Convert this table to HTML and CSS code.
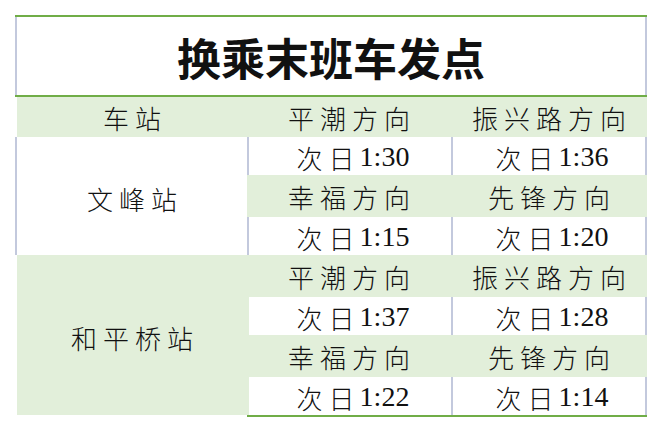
FILE: index.html
```html
<!DOCTYPE html>
<html lang="zh-CN">
<head>
<meta charset="utf-8">
<title>换乘末班车发点</title>
<link rel="stylesheet" href="styles.css">
</head>
<body>
<div class="sheet">
  <div class="title"><div class="title-box">换乘末班车发点</div></div>
  <div class="grid">
    <div class="c hd first">车站</div>
    <div class="c hd">平潮方向</div>
    <div class="c hd">振兴路方向</div>

    <div class="c station s1">文峰站</div>
    <div class="c t c2">次日<span class="n">1:30</span></div>
    <div class="c t c3">次日<span class="n">1:36</span></div>
    <div class="c g">幸福方向</div>
    <div class="c g">先锋方向</div>
    <div class="c t c2">次日<span class="n">1:15</span></div>
    <div class="c t c3">次日<span class="n">1:20</span></div>

    <div class="c station s2">和平桥站</div>
    <div class="c g">平潮方向</div>
    <div class="c g">振兴路方向</div>
    <div class="c t c2 lo">次日<span class="n">1:37</span></div>
    <div class="c t c3">次日<span class="n">1:28</span></div>
    <div class="c g">幸福方向</div>
    <div class="c g">先锋方向</div>
    <div class="c t c2 lo">次日<span class="n">1:22</span></div>
    <div class="c t c3">次日<span class="n">1:14</span></div>
    <div class="rule"></div>
  </div>
</div>
</body>
</html>
```

FILE: styles.css
```css
html, body {
  margin: 0;
  padding: 0;
  background: #ffffff;
}

body {
  font-family: "Liberation Serif", "Noto Sans CJK SC", serif;
  color: #111111;
}

.sheet {
  margin: 15px 0 0 15px;
  width: 632px;
}

.title {
  border-top: 2px solid #70ad47;
  border-bottom: 2px solid #70ad47;
}

.title-box {
  height: 78px;
  border-left: 2px solid #c3c9dd;
  border-right: 2px solid #c3c9dd;
  display: flex;
  align-items: center;
  justify-content: center;
  font-family: "Noto Sans CJK SC", sans-serif;
  font-weight: 700;
  font-size: 44px;
  color: #111111;
  padding-top: 2px;
  box-sizing: border-box;
}

.grid {
  display: grid;
  grid-template-columns: 232px 204px 196px;
  grid-template-rows: 40px 38px 42px 38px 42px 38px 42px 38px 2px;
}

.c {
  display: flex;
  align-items: center;
  justify-content: center;
  font-size: 26px;
  font-weight: 300;
  letter-spacing: 6px;
  padding-left: 6px;
  box-sizing: border-box;
  white-space: nowrap;
  font-family: "Liberation Serif", "Noto Sans CJK SC", serif;
}

.n {
  font-size: 28px;
  font-weight: 400;
  letter-spacing: 0;
  margin-left: -1px;
}

.hd {
  background: #e2efda;
}

.hd.first {
  border-left: 2px solid #ffffff;
}

.g {
  background: #e2efda;
}

.station {
  grid-column: 1;
}

.s1 {
  grid-row: 2 / 5;
  background: #ffffff;
  border-left: 2px solid #c3c9dd;
  padding-top: 4px;
}

.s2 {
  grid-row: 5 / 9;
  background: #e2efda;
  border-left: 2px solid #ffffff;
  padding-top: 4px;
}

.t {
  background: #ffffff;
  padding-top: 2px;
}

.c2 {
  border-left: 2px solid #c3c9dd;
}

.c2.lo {
  border-left-color: #e2efda;
}

.c3 {
  border-left: 2px solid #c3c9dd;
  border-right: 2px solid #c3c9dd;
}

.rule {
  grid-column: 2 / 4;
  grid-row: 9;
  background: #70ad47;
}
```
